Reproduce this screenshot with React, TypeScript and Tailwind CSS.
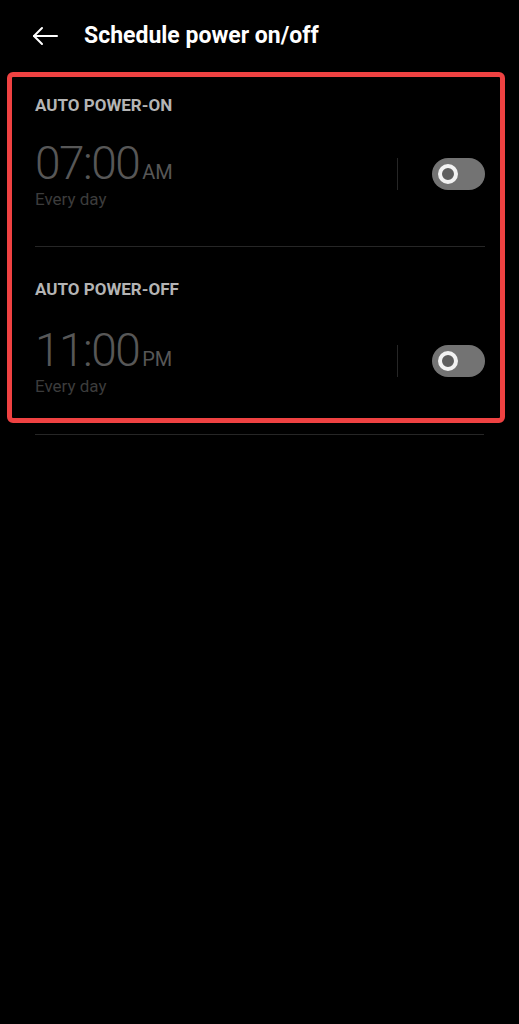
import React from "react";

interface Schedule {
  label: string;
  time: string;
  meridiem: string;
  repeat: string;
}

const schedules: Schedule[] = [
  { label: "AUTO POWER-ON", time: "07:00", meridiem: "AM", repeat: "Every day" },
  { label: "AUTO POWER-OFF", time: "11:00", meridiem: "PM", repeat: "Every day" },
];

const font = { fontFamily: "Roboto, 'Noto Sans', sans-serif" };

const Toggle = () => (
  <div className="w-[53px] h-[32px] rounded-full bg-[#737373] flex items-center pl-[6px]">
    <div className="w-[20px] h-[20px] rounded-full border-[4px] border-[#f2f2f2] bg-[#5e5e5e]" />
  </div>
);

const ScheduleRow = ({ item, first }: { item: Schedule; first: boolean }) => (
  <div className={first ? "pt-[17px]" : "pt-[31px]"}>
    <div className="text-[17px] leading-[22px] font-bold text-[#b4b4b4]">{item.label}</div>
    <div className={`flex items-center ${first ? "mt-[23px]" : "mt-[26px]"}`}>
      <div className="flex-1">
        <div className="flex items-baseline text-[#575757]">
          <span className="text-[46px] leading-[48px] font-light tracking-[-1.5px]">{item.time}</span>
          <span className="text-[20px] ml-[3px]">{item.meridiem}</span>
        </div>
        <div className="mt-[2px] text-[17px] leading-[20px] text-[#3c3c3c]">{item.repeat}</div>
      </div>
      <div className="w-px h-[32px] bg-[#262626] mr-[34px]" />
      <Toggle />
    </div>
  </div>
);

export default function App() {
  return (
    <div className="min-h-screen w-full bg-black" style={font}>
      <div className="h-[72px] flex items-center pl-[32px]">
        <svg width="27" height="20" viewBox="0 0 27 20" fill="none" stroke="#ffffff" strokeWidth="2" strokeLinecap="round" strokeLinejoin="round">
          <path d="M25 10H2" />
          <path d="M10 2L2 10l8 8" />
        </svg>
        <h1 className="ml-[25px] text-[23px] font-bold text-white">Schedule power on/off</h1>
      </div>

      <div className="ml-[7px] mr-[14px] border-[5px] border-[#ef4242] rounded-[6px] pl-[23px] pr-[15px] pb-[22px]">
        {schedules.map((item, i) => (
          <div key={item.label}>
            {i > 0 && <div className="mt-[37px] h-px bg-[#262626]" />}
            <ScheduleRow item={item} first={i === 0} />
          </div>
        ))}
      </div>

      <div className="mt-[11px] ml-[35px] mr-[35px] h-px bg-[#262626]" />
    </div>
  );
}
